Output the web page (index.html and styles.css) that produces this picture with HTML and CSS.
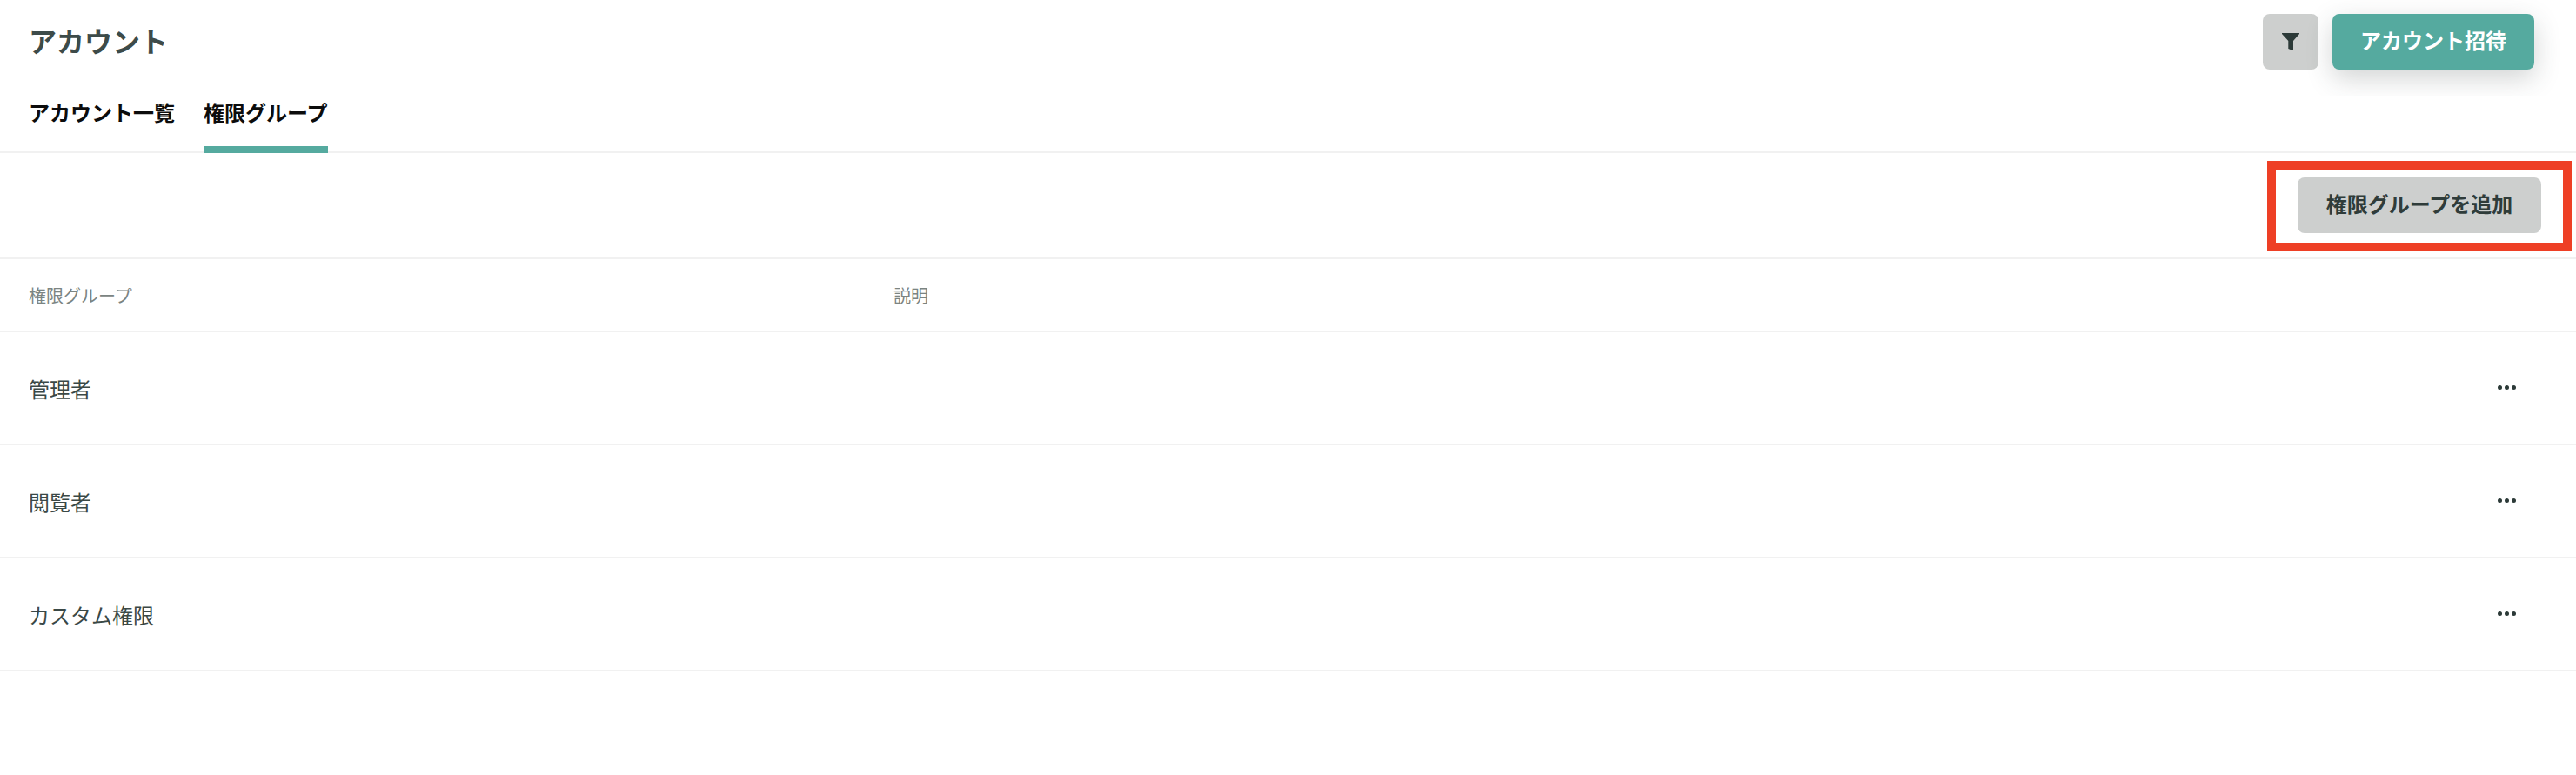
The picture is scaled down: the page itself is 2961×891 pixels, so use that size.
FILE: index.html
```html
<!DOCTYPE html>
<html lang="ja">
<head>
<meta charset="utf-8">
<title>アカウント</title>
<link rel="stylesheet" href="styles.css">
</head>
<body>
<div class="page">
  <header class="topbar">
    <h1 class="title">アカウント</h1>
    <div class="actions">
      <button class="btn btn-icon" aria-label="フィルター">
        <svg class="filter-icon" viewBox="0 0 20 20" width="20" height="20"><path d="M0 0H20V1L13 9V19.6L12.2 20L7.3 18V9L0 1Z"/></svg>
      </button>
      <button class="btn btn-primary">アカウント招待</button>
    </div>
  </header>
  <nav class="tabs">
    <a class="tab">アカウント一覧</a>
    <a class="tab tab-active">権限グループ</a>
  </nav>
  <div class="toolbar">
    <button class="btn btn-gray">権限グループを追加</button>
    <div class="highlight"></div>
  </div>
  <div class="table">
    <div class="row row-head"><span class="col-name">権限グループ</span><span class="col-desc">説明</span></div>
    <div class="row"><span class="col-name">管理者</span><span class="col-desc"></span><span class="more"><i></i><i></i><i></i></span></div>
    <div class="row"><span class="col-name">閲覧者</span><span class="col-desc"></span><span class="more"><i></i><i></i><i></i></span></div>
    <div class="row"><span class="col-name">カスタム権限</span><span class="col-desc"></span><span class="more"><i></i><i></i><i></i></span></div>
  </div>
</div>
</body>
</html>
```

FILE: styles.css
```css
* { box-sizing: border-box; }
html, body { margin: 0; padding: 0; background: #fff; }
body { font-family: "Noto Sans CJK JP", "Noto Sans", sans-serif; color: #3a4846; }
.page { width: 2961px; }
.topbar { height: 110px; margin-bottom: -16px; padding: 16px 48px 0 33px; display: flex; justify-content: space-between; align-items: flex-start; overflow: hidden; }
.title { margin: 0; font-size: 32px; line-height: 60px; font-weight: 700; color: #3d4b49; }
.actions { display: flex; gap: 16px; }
.btn { border: 0; height: 64px; border-radius: 8px; font-family: inherit; font-size: 24px; line-height: 36px; font-weight: 700; display: flex; align-items: center; justify-content: center; padding: 0 0 4px; }
.btn-icon { width: 64px; padding: 0; background: #cdcfce; }
.filter-icon { fill: #2c3a38; display: block; }
.btn-primary { width: 232px; background: #55aa9f; color: #fff; box-shadow: 0 10px 30px rgba(50, 60, 58, 0.22); }
.btn-gray { width: 280px; background: #cdcfce; color: #2f3c3a; }
.tabs { height: 82px; display: flex; gap: 33px; padding-left: 33px; border-bottom: 2px solid #f1f1f1; }
.tab { height: 82px; font-size: 24px; line-height: 36px; padding-top: 17px; font-weight: 700; color: #0c0c0c; }
.tab-active { border-bottom: 8px solid #55aa9f; }
.toolbar { height: 122px; padding: 28px 40px 0 0; display: flex; justify-content: flex-end; align-items: flex-start; border-bottom: 2px solid #f1f1f1; position: relative; }
.highlight { position: absolute; left: 2606px; top: 9px; width: 350px; height: 104px; border: 10px solid #ee3f25; }
.row { height: 130px; display: flex; align-items: center; padding-left: 33px; border-bottom: 2px solid #f1f1f1; font-size: 24px; position: relative; }
.row-head { height: 84px; font-size: 20px; color: #7b8482; }
.col-name { width: 994px; }
.more { position: absolute; left: 2871px; top: 50%; display: flex; gap: 3px; margin-top: -3px; }
.more i { width: 5px; height: 5px; border-radius: 50%; background: #2c3a38; display: block; }
```
